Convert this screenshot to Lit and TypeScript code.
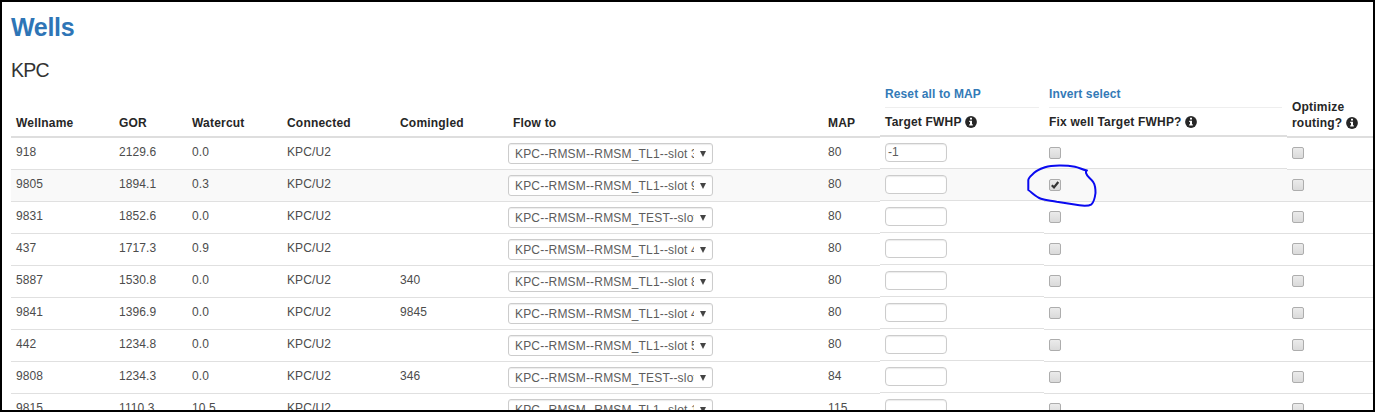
import { LitElement, html, css, nothing } from "lit";
import { customElement } from "lit/decorators.js";
import { classMap } from "lit/directives/class-map.js";

interface Well {
  name: string;
  gor: string;
  wct: string;
  comingled?: string;
  flow: string;
  map: string;
  target?: string;
  fixed?: boolean;
}

const TL1 = "KPC--RMSM--RMSM_TL1--slot ";
const TEST = "KPC--RMSM--RMSM_TEST--slot ";

const WELLS: Well[] = [
  { name: "918", gor: "2129.6", wct: "0.0", flow: TL1 + "3", map: "80", target: "-1" },
  { name: "9805", gor: "1894.1", wct: "0.3", flow: TL1 + "9", map: "80", fixed: true },
  { name: "9831", gor: "1852.6", wct: "0.0", flow: TEST, map: "80" },
  { name: "437", gor: "1717.3", wct: "0.9", flow: TL1 + "4", map: "80" },
  { name: "5887", gor: "1530.8", wct: "0.0", comingled: "340", flow: TL1 + "8", map: "80" },
  { name: "9841", gor: "1396.9", wct: "0.0", comingled: "9845", flow: TL1 + "4", map: "80" },
  { name: "442", gor: "1234.8", wct: "0.0", flow: TL1 + "5", map: "80" },
  { name: "9808", gor: "1234.3", wct: "0.0", comingled: "346", flow: TEST, map: "84" },
  { name: "9815", gor: "1110.3", wct: "10.5", flow: TL1 + "1", map: "115" },
];

@customElement("app-root")
export class AppRoot extends LitElement {
  static styles = css`
    :host {
      display: block;
      font: 12px/16px "Liberation Sans", Arial, sans-serif;
      letter-spacing: 0.1px;
      color: #4c4c4c;
    }
    .frame {
      box-sizing: border-box;
      position: relative;
      width: 1375px;
      height: 412px;
      border: 2px solid #000;
      background: #fff;
      overflow: hidden;
      padding-left: 9px;
    }
    h1 {
      margin: 9px 0 0;
      font-size: 25px;
      line-height: 32px;
      letter-spacing: -0.3px;
      color: #2e75b6;
    }
    h2 {
      margin: 16px 0 0;
      font-size: 19.5px;
      line-height: 22px;
      letter-spacing: -0.8px;
      font-weight: 400;
      color: #333;
    }
    .row {
      display: grid;
      grid-template-columns: 103px 73px 95px 113px 113px 315px 57px 164px 243px 86px;
      height: 32px;
    }
    .cell {
      box-sizing: border-box;
      height: 32px;
      border-top: 1px solid #e0e0e0;
      padding: 6px 5px 0;
      white-space: nowrap;
    }
    .cell.control {
      padding-top: 5px;
    }
    .row.first {
      height: 33px;
    }
    .row.first .cell {
      border-top: 2px solid #dedede;
      height: 33px;
    }
    .row.striped .cell {
      background: #f9f9f9;
    }
    .row .cell.raised {
      margin-top: -1px;
      padding-top: 6px;
      height: 33px;
    }
    .row.head {
      height: 55px;
      align-items: end;
      font-weight: 700;
      color: #262626;
      letter-spacing: 0.2px;
    }
    .th {
      padding: 0 5px 5px;
      white-space: nowrap;
    }
    .th.stack {
      padding-bottom: 6px;
    }
    .link {
      display: block;
      color: #337ab7;
      padding-bottom: 5px;
      margin-bottom: 6px;
      border-bottom: 1px solid #eee;
      letter-spacing: 0.12px;
    }
    .info {
      width: 12px;
      height: 12px;
      vertical-align: -2px;
    }
    .select {
      box-sizing: border-box;
      display: flex;
      align-items: center;
      justify-content: space-between;
      width: 205px;
      height: 21px;
      margin-left: -5px;
      border: 1px solid #ccc;
      border-radius: 3px;
      background: #fff;
      padding: 0 6px;
      box-shadow: inset 0 1px 1px rgba(0, 0, 0, 0.08);
      color: #5c5c5c;
    }
    .value {
      width: 179px;
      overflow: hidden;
      letter-spacing: 0.18px;
    }
    .arrow {
      width: 6px;
      height: 6px;
    }
    .input {
      box-sizing: border-box;
      width: 62px;
      height: 19px;
      border: 1px solid #ccc;
      border-radius: 4px;
      background: #fff;
      padding-left: 2px;
      line-height: 17px;
      color: #5c5c5c;
      box-shadow: inset 0 1px 1px rgba(0, 0, 0, 0.08);
    }
    .check {
      box-sizing: border-box;
      width: 12px;
      height: 12px;
      margin-top: 4px;
      border: 1px solid #adadad;
      border-radius: 2px;
      background: linear-gradient(#ebebeb, #dadada);
      display: grid;
      place-items: center;
    }
    .tick {
      width: 10px;
      height: 10px;
    }
    .ink {
      position: absolute;
      left: -2px;
      top: -2px;
      width: 1375px;
      height: 412px;
      pointer-events: none;
    }
  `;

  private info() {
    return html`<svg class="info" viewBox="0 0 12 12">
      <circle cx="6" cy="6" r="5.9" fill="#262626" />
      <path d="M5 1.8h2v1.7H5zM4.2 4.8H7v3.5h.8v1.2H4.2V8.300H5V6h-.8z" fill="#fff" />
    </svg>`;
  }

  private check(on?: boolean) {
    return html`<div class="check">
      ${on
        ? html`<svg class="tick" viewBox="0 0 10 10">
            <path d="M1.800 5.200L4 7.400L8.300 2" fill="none" stroke="#333" stroke-width="2.200" />
          </svg>`
        : nothing}
    </div>`;
  }

  private wellRow(w: Well, i: number) {
    const row = { row: true, first: i === 0, striped: i === 1 };
    const fix = { cell: true, control: true, raised: i < 2 };
    return html`<div class=${classMap(row)}>
      <div class="cell">${w.name}</div>
      <div class="cell">${w.gor}</div>
      <div class="cell">${w.wct}</div>
      <div class="cell">KPC/U2</div>
      <div class="cell">${w.comingled ?? nothing}</div>
      <div class="cell control">
        <div class="select">
          <span class="value">${w.flow}</span>
          <svg class="arrow" viewBox="0 0 6 6"><path d="M0 0H6L3 6Z" fill="#444" /></svg>
        </div>
      </div>
      <div class="cell">${w.map}</div>
      <div class="cell control raised"><div class="input">${w.target ?? nothing}</div></div>
      <div class=${classMap(fix)}>${this.check(w.fixed)}</div>
      <div class="cell control">${this.check()}</div>
    </div>`;
  }

  render() {
    return html`<div class="frame">
      <h1>Wells</h1>
      <h2>KPC</h2>
      <div class="row head">
        <div class="th">Wellname</div>
        <div class="th">GOR</div>
        <div class="th">Watercut</div>
        <div class="th">Connected</div>
        <div class="th">Comingled</div>
        <div class="th">Flow to</div>
        <div class="th">MAP</div>
        <div class="th stack"><span class="link">Reset all to MAP</span>Target FWHP ${this.info()}</div>
        <div class="th stack"><span class="link">Invert select</span>Fix well Target FWHP? ${this.info()}</div>
        <div class="th">Optimize<br />routing? ${this.info()}</div>
      </div>
      ${WELLS.map((w, i) => this.wellRow(w, i))}
      <svg class="ink" viewBox="0 0 1375 412">
        <path
          d="M1087 170.500C1083 170 1079 167.500 1075 166.700C1066 165 1052 165 1045 167.200C1040 169 1037 170 1034.500 172.500C1032 175 1028.500 177 1028.300 180V190C1032 192.500 1036 197 1041 198.700C1046 200.500 1051 200.500 1056.700 201.700L1073 204.300C1079 205.500 1088 206.500 1091.500 204.300C1094 202 1095 197 1095.500 193C1095.500 189 1095 185 1093.500 182.500C1091 178 1087 177 1086 173V170.500"
          fill="none" stroke="#0a0af0" stroke-width="2" stroke-linecap="round" stroke-linejoin="round" />
      </svg>
    </div>`;
  }
}
